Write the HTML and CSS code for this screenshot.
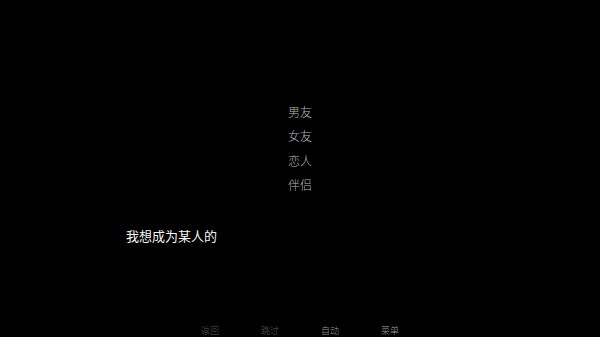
FILE: index.html
```html
<!DOCTYPE html>
<html lang="zh">
  <head>
    <meta charset="UTF-8" />
    <title>选择</title>
    <link rel="stylesheet" href="styles.css">
  </head>
  <body>
    <div class="screen">
      <!-- 选项 -->
      <div class="choices">
        <div class="choice">男友</div>
        <div class="choice">女友</div>
        <div class="choice">恋人</div>
        <div class="choice">伴侣</div>
      </div>

      <!-- 对话 -->
      <div class="say">我想成为某人的</div>

      <!-- 快捷菜单 -->
      <div class="quick">
        <span class="quick-item off">返回</span>
        <span class="quick-item off">跳过</span>
        <span class="quick-item">自动</span>
        <span class="quick-item">菜单</span>
      </div>
    </div>
  </body>
</html>
```

FILE: styles.css
```css
html, body {
  margin: 0;
  background-color: #000;
}
body {
  font-family: "Noto Sans CJK SC", "Noto Sans", sans-serif;
}
.screen {
  width: 600px;
  height: 337px;
  display: flex;
  flex-direction: column;
  box-sizing: border-box;
  padding-top: 100px;
  overflow: hidden;
}
.choices {
  display: flex;
  flex-direction: column;
  align-items: center;
}
.choice {
  font-size: 12px;
  line-height: 24.3px;
  color: #b4b4b4;
  font-weight: 300;
}
.say {
  margin-top: 31px;
  padding-left: 126px;
  font-size: 13px;
  line-height: 16px;
  color: #f4f4f4;
  font-weight: 400;
}
.quick {
  margin-top: auto;
  margin-bottom: 0;
  display: flex;
  justify-content: center;
}
.quick-item {
  width: 60px;
  text-align: center;
  font-size: 9px;
  line-height: 12px;
  color: #9a9a9a;
  font-weight: 300;
}
.quick-item.off {
  color: #5c5c5c;
}
```
